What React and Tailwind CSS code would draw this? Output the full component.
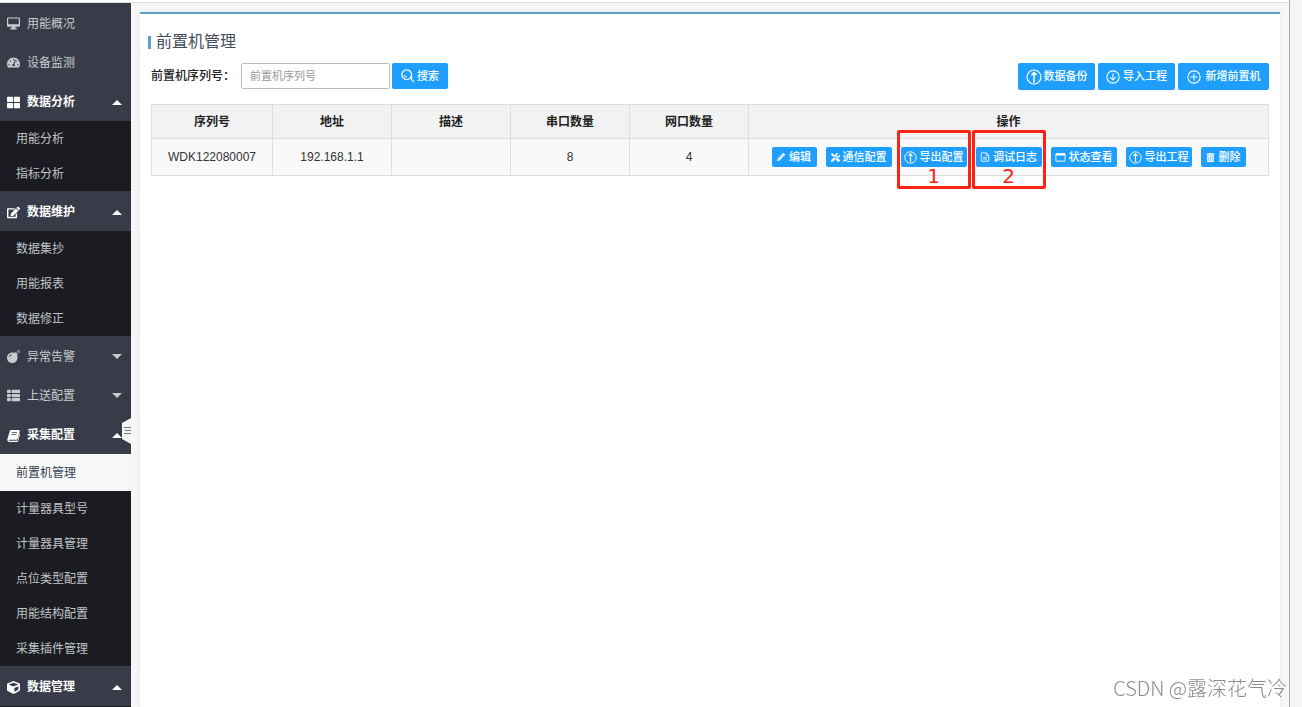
import { useState } from "react"
import { FaTachometerAlt, FaThLarge, FaEdit, FaBomb, FaThList, FaCube, FaPencilAlt, FaTrashAlt, FaTools } from "react-icons/fa"

function MonitorIcon({ className }) {
  return (
    <svg viewBox="0 0 14 13" fill="currentColor" className={className}>
      <path fillRule="evenodd" d="M1 0h12a1 1 0 0 1 1 1v8a1 1 0 0 1-1 1H9v1.5h1.5V13h-7v-1.5H5V10H1a1 1 0 0 1-1-1V1a1 1 0 0 1 1-1zm.3 1.2v6h11.4v-6z" />
    </svg>
  )
}

function BookIcon({ className }) {
  return (
    <svg viewBox="0 0 14 14" fill="currentColor" className={className}>
      <path fillRule="evenodd" d="M4.6 1h7.9c1 0 1.5.7 1.2 1.6l-2.4 8c-.2.7-.8 1.1-1.5 1.1H2.4c-.5 0-.6.3-.3.6.1.2.4.3.8.3h7.6c.4 0 .7-.2.8-.6l2.2-7.3c.5.3.6.8.5 1.3l-2.1 6.8c-.2.7-.8 1.2-1.5 1.2H2.6C1.200 14 0 12.600.300 11.300L3 2.200C3.200 1.500 3.800 1 4.600 1zm.8 2.500-.2.700h5.600l.2-.700zm-.6 2-.2.700h5.600l.2-.700z" />
    </svg>
  )
}

const menu = [
  { label: "用能概况", icon: MonitorIcon },
  { label: "设备监测", icon: FaTachometerAlt },
  { label: "数据分析", icon: FaThLarge, open: true, children: ["用能分析", "指标分析"] },
  { label: "数据维护", icon: FaEdit, open: true, children: ["数据集抄", "用能报表", "数据修正"] },
  { label: "异常告警", icon: FaBomb, children: [] },
  { label: "上送配置", icon: FaThList, children: [] },
  {
    label: "采集配置",
    icon: BookIcon,
    open: true,
    children: ["前置机管理", "计量器具型号", "计量器具管理", "点位类型配置", "用能结构配置", "采集插件管理"],
  },
  { label: "数据管理", icon: FaCube, open: true, children: [] },
]

const columns = ["序列号", "地址", "描述", "串口数量", "网口数量"]

const rows = [{ serial: "WDK122080007", address: "192.168.1.1", desc: "", serialPorts: 8, netPorts: 4 }]

function CircleIcon({ type, className }) {
  const paths = {
    up: "M8 13.5V4M5.500 6 8 3.500 10.500 6",
    down: "M8 4v7M5 8.500 8 11.500 11 8.500",
    plus: "M8 4v8M4 8h8",
  }
  return (
    <svg viewBox="0 0 16 16" fill="none" stroke="currentColor" strokeWidth="1.2" className={className}>
      <circle cx="8" cy="8" r="7" />
      <path d={paths[type]} strokeWidth={type === "up" ? 1.5 : 1.2} />
    </svg>
  )
}

function SearchIcon() {
  return (
    <svg viewBox="0 0 16 16" fill="none" stroke="currentColor" strokeWidth="1.4" className="size-3.5">
      <circle cx="6.500" cy="6.500" r="5.500" />
      <path d="M12.500 8.500c0 1.500-.8 2.500-1.500 3M11 11l4 4M3.800 7.500A3 3 0 0 0 6.500 9.500" />
    </svg>
  )
}

function FileIcon() {
  return (
    <svg viewBox="0 0 12 12" fill="none" stroke="currentColor" strokeWidth="1" className="size-2.5">
      <path d="M1.500 1h6L10.500 4v7h-9zM7.500 1v3h3M3.500 6.500h5M3.500 8.500h5" />
    </svg>
  )
}

function WindowIcon() {
  return (
    <svg viewBox="0 0 12 12" fill="none" stroke="currentColor" strokeWidth="1" className="h-3 w-[11px]">
      <path d="M1 2.500h10v8H1z" />
      <path d="M1 3.200h10" strokeWidth="2.4" />
    </svg>
  )
}

const actions = [
  { label: "编辑", icon: <FaPencilAlt className="mr-px size-2" /> },
  { label: "通信配置", icon: <FaTools className="size-[9px]" /> },
  { label: "导出配置", icon: <CircleIcon type="up" className="size-[13px]" />, mark: "1" },
  { label: "调试日志", icon: <FileIcon />, mark: "2" },
  { label: "状态查看", icon: <WindowIcon /> },
  { label: "导出工程", icon: <CircleIcon type="up" className="size-[13px]" /> },
  { label: "删除", icon: <FaTrashAlt className="mr-px size-[9px]" /> },
]

function Caret({ open }) {
  return (
    <svg viewBox="0 0 10 5" fill="currentColor" className="h-[5px] w-2.5">
      <path d={open ? "M0 5 5 0l5 5z" : "M0 0l5 5 5-5z"} />
    </svg>
  )
}

function Sidebar() {
  const [active, setActive] = useState("前置机管理")
  return (
    <aside className="relative w-[131px] shrink-0 bg-[#1b1c22]">
      <nav>
        {menu.map(({ label, icon: Icon, open, children }) => (
          <div key={label}>
            <button
              className={`flex w-full items-center bg-[#383c49] pt-0.5 pr-[9px] pl-[7px] ${
                open ? "h-10 font-bold text-white" : "h-[39px] text-[#c9cbd0]"
              }`}
            >
              <Icon className="size-[13px]" />
              <span className="ml-[7px] flex-1 text-left">{label}</span>
              {children && <Caret open={open} />}
            </button>
            {open && children.length > 0 && (
              <ul>
                {children.map((name) => (
                  <li key={name}>
                    <a
                      href="#"
                      onClick={() => setActive(name)}
                      className={`flex items-center pl-4 ${
                        name === active ? "h-[37px] bg-[#f7f7f7] text-[#33404f]" : "h-[35px] text-[#c2c3c6]"
                      }`}
                    >
                      {name}
                    </a>
                  </li>
                ))}
              </ul>
            )}
          </div>
        ))}
      </nav>
      {/* Collapse handle */}
      <button aria-label="收起菜单" className="absolute top-[415px] right-0">
        <svg viewBox="0 0 9 26" className="h-[26px] w-[9px]">
          <path d="M9 0 0 5v16l9 5z" fill="#f4f5f6" />
          <path d="M2 9.500h7M3 12.500h6M2 15.500h7" stroke="#777" fill="none" />
        </svg>
      </button>
    </aside>
  )
}

function ToolButton({ icon, children, className }) {
  return (
    <button
      className={`flex items-center justify-center rounded-xs bg-[#1e9fff] text-[11px] font-medium text-white ${className}`}
    >
      {icon}
      {children}
    </button>
  )
}

export default function App() {
  const [keyword, setKeyword] = useState("")

  return (
    <div className="flex min-h-screen bg-[#f6f6f6] font-['Liberation_Sans','Noto_Sans_CJK_SC',sans-serif] text-xs text-[#333]">
      <div className="flex min-w-0 flex-1 flex-col border-r border-[#aaa]">
        <div className="h-[3px] border-b border-[#ddd] bg-white" />
        <div className="flex flex-1">
          <Sidebar />
          <main className="mt-[9px] mr-[9px] ml-[9px] min-w-0 flex-1 border-t-2 border-[#5b9fca] bg-white px-[11px] shadow-[0_0_4px_#dfe5ea]">
            <h1 className="mt-4 -ml-[3px] flex h-6 items-center gap-[5px] text-base text-[#444c59]">
              <span className="h-[13px] w-[3px] bg-[#5b9fca]" />
              前置机管理
            </h1>

            {/* Search and tools */}
            <div className="mt-[9px] flex items-start justify-between">
              <form className="flex items-center" onSubmit={(e) => e.preventDefault()}>
                <label htmlFor="serial" className="w-[90px] font-medium whitespace-nowrap text-[#222]">
                  前置机序列号：
                </label>
                <input
                  id="serial"
                  type="text"
                  value={keyword}
                  onChange={(e) => setKeyword(e.target.value)}
                  placeholder="前置机序列号"
                  className="h-[26px] w-[149px] rounded-xs border border-[#bbb] px-2 text-[11px] placeholder:text-[#999]"
                />
                <ToolButton icon={<SearchIcon />} className="ml-0.5 h-[26px] w-14 gap-0.5">搜索</ToolButton>
              </form>
              <div className="flex gap-[3px]">
                <ToolButton icon={<CircleIcon type="up" className="size-4" />} className="h-[27px] w-[77px] gap-0.5">数据备份</ToolButton>
                <ToolButton icon={<CircleIcon type="down" className="size-3.5" />} className="h-[27px] w-[77px] gap-[3px]">导入工程</ToolButton>
                <ToolButton icon={<CircleIcon type="plus" className="size-3.5" />} className="h-[27px] w-[91px] gap-[5px]">新增前置机</ToolButton>
              </div>
            </div>

            <table className="mt-3.5 w-full table-fixed border-collapse border border-[#ddd] text-center">
              <thead>
                <tr className="h-[34px] bg-[#f2f2f2] text-[#222]">
                  {columns.map((name) => (
                    <th key={name} className="w-[119px] border border-[#ddd] first:w-[121px]">{name}</th>
                  ))}
                  <th className="border border-[#ddd]">操作</th>
                </tr>
              </thead>
              <tbody>
                {rows.map((row) => (
                  <tr key={row.serial} className="h-[37px] bg-[#f9f9f9]">
                    <td className="border border-[#ddd]">{row.serial}</td>
                    <td className="border border-[#ddd]">{row.address}</td>
                    <td className="border border-[#ddd]">{row.desc}</td>
                    <td className="border border-[#ddd]">{row.serialPorts}</td>
                    <td className="border border-[#ddd]">{row.netPorts}</td>
                    <td className="border border-[#ddd]">
                      <div className="flex justify-center gap-[9px]">
                        {actions.map(({ label, icon, mark }) => (
                          <div key={label} className="relative">
                            <button
                              className={`flex h-5 items-center justify-center gap-[3px] rounded-xs bg-[#1e9fff] text-[11px] font-medium whitespace-nowrap text-white ${
                                label.length > 2 ? "w-[66px]" : "w-[45px]"
                              }`}
                            >
                              {icon}
                              {label}
                            </button>
                            {mark && (
                              <span className="pointer-events-none absolute -inset-x-1 -top-[17px] flex h-[59px] items-end justify-center rounded-xs border-3 border-[#fb2414] font-['DejaVu_Sans',sans-serif] text-xl leading-5 text-[#fb2414]">
                                {mark}
                              </span>
                            )}
                          </div>
                        ))}
                      </div>
                    </td>
                  </tr>
                ))}
              </tbody>
            </table>
          </main>
        </div>
      </div>
      <div className="w-3 shrink-0" />

      {/* Watermark */}
      <div className="pointer-events-none fixed right-[15px] bottom-[5px] font-['Noto_Sans_CJK_SC',sans-serif] text-xl font-light text-[#8b8b8b]">
        CSDN @露深花气冷
      </div>
    </div>
  )
}
